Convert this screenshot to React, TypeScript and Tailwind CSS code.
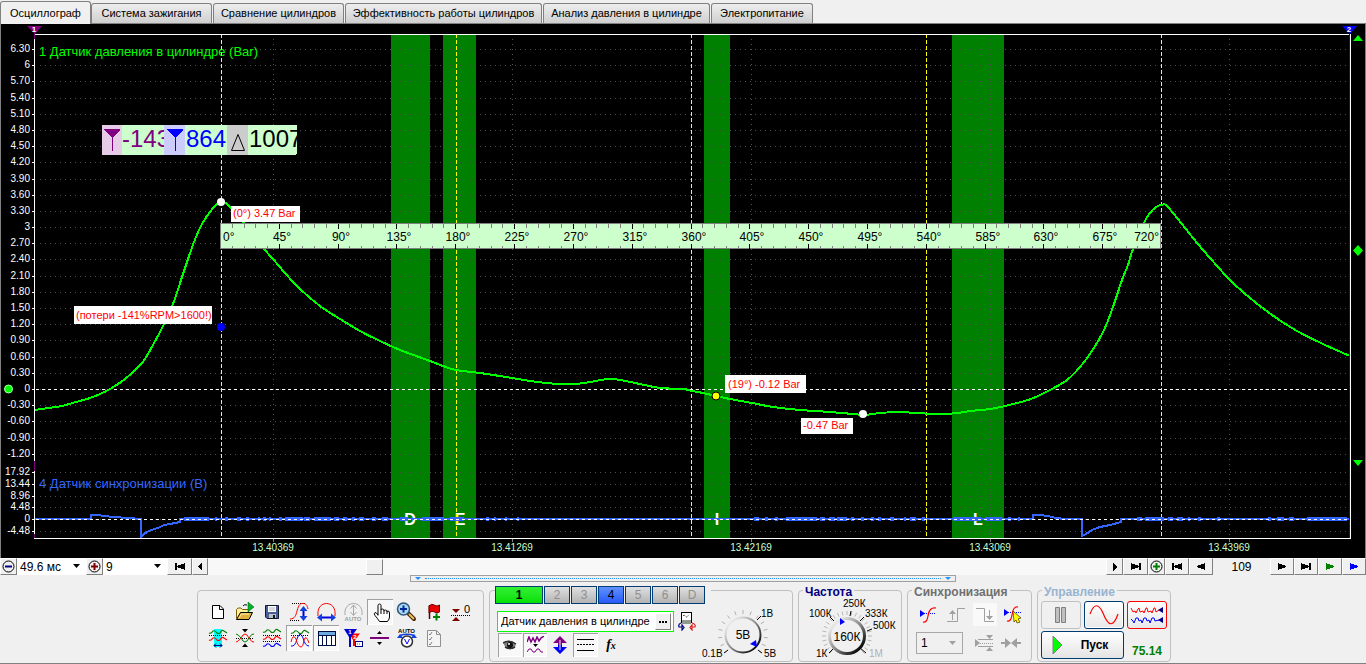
import React from "react";
import type { ReactNode } from "react";

const TABS = [
  { label: "Осциллограф", width: "w-[91px]" },
  { label: "Система зажигания", width: "w-[121px]" },
  { label: "Сравнение цилиндров", width: "w-[131px]" },
  { label: "Эффективность работы цилиндров", width: "w-[197px]" },
  { label: "Анализ давления в цилиндре", width: "w-[167px]" },
  { label: "Электропитание", width: "w-[102px]" },
];

/* ---------- chart data ---------- */

const Y_TICKS = Array.from({ length: 26 }, (_, i) => {
  const step = 21 - i;
  const value = step * 0.3;
  const whole = Math.abs(value - Math.round(value)) < 0.01;
  return { y: Math.round(389 - step * 16.19), label: whole && step >= 0 ? String(Math.round(value)) : value.toFixed(2) };
});

const SYNC_TICKS = [
  { y: 472, label: "17.92" },
  { y: 484, label: "13.44" },
  { y: 496, label: "8.96" },
  { y: 507, label: "4.48" },
  { y: 519, label: "0" },
  { y: 531, label: "-4.48" },
];

const X_TICKS = [
  { x: 273, label: "13.40369" },
  { x: 512, label: "13.41269" },
  { x: 751, label: "13.42169" },
  { x: 990, label: "13.43069" },
  { x: 1229, label: "13.43969" },
];

const BANDS = [
  { x: 391, w: 39, letter: "D", lx: 410 },
  { x: 443, w: 33, letter: "E", lx: 460 },
  { x: 704, w: 26, letter: "I", lx: 717 },
  { x: 952, w: 52, letter: "L", lx: 978 },
];

const PRESSURE: [number, number][] = [
  [35, 410], [48, 408], [62, 406], [76, 402], [90, 398], [100, 394], [110, 389], [125, 379], [142, 363], [153, 345],
  [163, 326], [173, 304], [182, 277], [188, 259], [194, 242], [200, 228], [205, 219], [210, 212], [215, 206], [221, 202],
  [226, 203], [231, 208], [240, 218], [250, 231], [265, 250], [273, 259], [285, 273], [300, 289], [320, 306], [340, 319],
  [360, 331], [380, 341], [400, 350], [430, 361], [443, 366], [456, 370], [480, 373], [512, 378], [530, 381], [558, 384],
  [575, 384], [590, 382], [608, 379], [620, 380], [640, 384], [660, 388], [683, 389], [692, 391], [703, 393], [716, 396],
  [730, 399], [752, 403], [773, 407], [800, 410], [830, 412], [853, 414], [865, 415], [880, 413], [900, 412], [915, 413],
  [940, 414], [958, 413], [970, 411], [990, 409], [1005, 406], [1028, 400], [1040, 395], [1052, 389], [1067, 380],
  [1080, 367], [1092, 351], [1104, 330], [1113, 307], [1122, 280], [1128, 265], [1133, 249], [1144, 223], [1150, 213],
  [1156, 207], [1161, 205], [1166, 205], [1173, 213], [1182, 224], [1193, 238], [1210, 258], [1230, 280], [1250, 298],
  [1272, 315], [1297, 331], [1323, 344], [1350, 356],
];

function smoothPath(points: [number, number][]) {
  let d = `M${points[0][0]} ${points[0][1]}`;
  for (let i = 0; i < points.length - 1; i++) {
    const a = points[Math.max(i - 1, 0)];
    const b = points[i];
    const c = points[i + 1];
    const e = points[Math.min(i + 2, points.length - 1)];
    const k = 6;
    d += `C${b[0] + (c[0] - a[0]) / k} ${b[1] + (c[1] - a[1]) / k} ${c[0] - (e[0] - b[0]) / k} ${c[1] - (e[1] - b[1]) / k} ${c[0]} ${c[1]}`;
  }
  return d;
}

const SYNC =
  "M35 519H91V515H98L104 516L113 517L128 518L141 519V537L144 534L147 532L151 530L158 528L164 525L170 524L180 522V519H1033V515H1040L1048 516L1056 518L1065 519H1082V536L1086 534L1092 530L1100 527L1110 525L1121 522V519H1350";

/* [start, length] of the thicker, noisy stretches of the sync trace */
const NOISE: [number, number][] = [
  [184, 25], [215, 2], [225, 3], [237, 4], [246, 3], [258, 2], [263, 3], [269, 2], [279, 3], [285, 18], [304, 6], [314, 17],
  [334, 5], [343, 4], [352, 3], [359, 5], [372, 4], [382, 6], [400, 8], [422, 22], [450, 14], [486, 3], [494, 2], [505, 2],
  [517, 2], [754, 5], [765, 3], [775, 3], [786, 31], [820, 5], [829, 6], [837, 10], [851, 3], [861, 3], [871, 3], [878, 3],
  [890, 4], [904, 2], [910, 6], [922, 3], [953, 28], [985, 17], [1008, 3], [1018, 2], [1137, 5], [1145, 19], [1168, 5],
  [1177, 6], [1188, 2], [1198, 3], [1217, 3], [1268, 3], [1277, 7], [1289, 5], [1307, 40],
];

const RULER_X = 220;
const RULER_STEP = 941 / 80;

function Tag({ x, y, w, h, tx, children }: { x: number; y: number; w: number; h: number; tx: number; children: string }) {
  return (
    <g>
      <rect x={x} y={y} width={w} height={h} fill="#fff" />
      <text x={tx} y={y + h - 5} fontSize="11" fill="#f00">{children}</text>
    </g>
  );
}

function Chart() {
  return (
    <svg viewBox="0 24 1366 534" className="block h-auto w-full bg-black font-['Liberation_Sans',Arial,sans-serif]" role="img" aria-label="Осциллограмма давления в цилиндре">
      <defs>
        <clipPath id="clipA"><rect x="122" y="125" width="42" height="30" /></clipPath>
        <clipPath id="clipB"><rect x="185" y="125" width="42" height="30" /></clipPath>
        <clipPath id="clipC"><rect x="248" y="125" width="49" height="30" /></clipPath>
      </defs>
      <g shapeRendering="crispEdges">
        <rect x="0" y="24" width="1" height="534" fill="#808080" />
        <rect x="1365" y="24" width="1" height="534" fill="#808080" />
        {BANDS.map((b) => <rect key={b.x} x={b.x} y="35" width={b.w} height="503" fill="#008000" />)}
        {[...Y_TICKS, ...SYNC_TICKS].map((t) => (
          <line key={t.y} x1="40" x2="1349" y1={t.y + 0.5} y2={t.y + 0.5} stroke="#4f4f4f" strokeDasharray="1 4" />
        ))}
        {X_TICKS.map((t) => (
          <g key={t.x}>
            <line x1={t.x + 0.5} x2={t.x + 0.5} y1="39" y2="538" stroke="#4f4f4f" strokeDasharray="1 4" />
            <line x1={t.x + 0.5} x2={t.x + 0.5} y1="539" y2="542" stroke="#808080" />
          </g>
        ))}
      </g>

      <text x="39" y="56" fontSize="13" fill="#00ff00">1 Датчик давления в цилиндре (Bar)</text>
      <text x="39" y="488" fontSize="13" fill="#3366ff">4 Датчик синхронизации (В)</text>
      <g fontSize="16" fontWeight="bold" fill="#fff" textAnchor="middle">
        {BANDS.map((b) => <text key={b.letter} x={b.lx} y="525">{b.letter}</text>)}
      </g>

      <g shapeRendering="crispEdges">
        {[221, 456, 691, 926, 1161].map((x) => (
          <line key={x} x1={x + 0.5} x2={x + 0.5} y1="34" y2="538" stroke="#ffff00" strokeDasharray="4 2" />
        ))}
        <line x1="36" x2="1350" y1="389.5" y2="389.5" stroke="#fff" strokeDasharray="3 3" />
      </g>
      <path d={smoothPath(PRESSURE)} fill="none" stroke="#00ff00" strokeWidth="2" shapeRendering="crispEdges" />
      <g shapeRendering="crispEdges">
        <path d={SYNC} fill="none" stroke="#3366ff" strokeWidth="2" />
        {NOISE.map(([x, w]) => <rect key={x} x={x} y="517" width={w} height="4" fill="#3366ff" />)}
        <line x1="36" x2="1350" y1="519.5" y2="519.5" stroke="#fff" strokeDasharray="3 3" />
      </g>

      <g shapeRendering="crispEdges">
        <rect x="34" y="34" width="1317" height="1" fill="#fff" />
        <rect x="34" y="538" width="1317" height="1" fill="#fff" />
        <rect x="34" y="34" width="1" height="505" fill="#fff" />
        <rect x="1350" y="34" width="1" height="505" fill="#fff" />
        <rect x="1349" y="34" width="1" height="504" fill="#00f" />
        <rect x="34" y="33" width="1" height="6" fill="#800080" />
        <rect x="34" y="461" width="1" height="10" fill="#800080" />
        <rect x="34" y="534" width="1" height="4" fill="#800080" />
        {[...Y_TICKS, ...SYNC_TICKS].map((t) => <rect key={t.y} x="32" y={t.y} width="2" height="1" fill="#fff" />)}
      </g>
      <g fontSize="10" fill="#fff" textAnchor="end">
        {[...Y_TICKS, ...SYNC_TICKS].map((t) => <text key={t.y} x="30" y={t.y + 3}>{t.label}</text>)}
      </g>
      <g fontSize="10" fill="#ccffcc" textAnchor="middle">
        {X_TICKS.map((t) => <text key={t.x} x={t.x} y="551">{t.label}</text>)}
      </g>

      <path d="M27 26H42L35 34Z" fill="#800080" />
      <text x="34" y="32" fontSize="8" fontWeight="bold" fill="#fff" textAnchor="middle">1</text>
      <path d="M1342 26H1357L1350 34Z" fill="#0000ff" />
      <text x="1349" y="32" fontSize="8" fontWeight="bold" fill="#fff" textAnchor="middle">2</text>
      <path d="M1353 41L1358 35L1363 41ZM1353 250.500L1358 245L1363 250.500L1358 256ZM1353 460H1363L1358 466Z" fill="#00ff00" />
      <circle cx="8.500" cy="389" r="4" fill="#00ff00" stroke="#b0ffb0" />

      <rect x="220.500" y="223.500" width="940" height="25" fill="#ccffcc" stroke="#808080" shapeRendering="crispEdges" />
      <g shapeRendering="crispEdges">
        {Array.from({ length: 79 }, (_, i) => {
          const n = i + 1;
          const x = Math.round(RULER_X + n * RULER_STEP);
          const major = n % 5 === 0;
          return (
            <g key={n} fill={major ? "#000" : "#808080"}>
              <rect x={x} y="224" width="1" height={major ? 5 : 4} />
              <rect x={x} y={major ? 244 : 246} width="1" height={major ? 5 : 3} />
            </g>
          );
        })}
      </g>
      <g fontSize="12" fill="#000">
        <text x="223" y="241">0°</text>
        <g textAnchor="middle">
          {Array.from({ length: 15 }, (_, i) => (
            <text key={i} x={Math.round(RULER_X + (i + 1) * 5 * RULER_STEP + 3)} y="241">{`${(i + 1) * 45}°`}</text>
          ))}
        </g>
        <text x="1159" y="241" textAnchor="end">720°</text>
      </g>

      <circle cx="221" cy="202" r="4" fill="#fff" />
      <circle cx="221" cy="327" r="4" fill="#00f" />
      <circle cx="716" cy="396" r="4" fill="#ff0" stroke="#000" />
      <circle cx="863" cy="414" r="4" fill="#fff" />
      <Tag x={231} y={206} w={69} h={16} tx={233}>(0°) 3.47 Bar</Tag>
      <Tag x={74} y={306} w={138} h={18} tx={76}>{"(потери -141%RPM>1600!)"}</Tag>
      <Tag x={725} y={375} w={81} h={18} tx={728}>(19°) -0.12 Bar</Tag>
      <Tag x={801} y={418} w={52} h={16} tx={803}>-0.47 Bar</Tag>

      <g shapeRendering="crispEdges">
        <rect x="102" y="125" width="195" height="30" rx="2" fill="#ccffcc" />
        <rect x="102" y="125" width="20" height="30" fill="#e6cce6" />
        <rect x="164" y="125" width="21" height="30" fill="#ccccff" />
        <rect x="227" y="125" width="21" height="30" fill="#cccccc" />
        <path d="M104 129H120V130L113 137V151H112V137L104 130Z" fill="#800080" />
        <path d="M167 129H183V130L176 137V151H175V137L167 130Z" fill="#0000ff" />
      </g>
      <path d="M231.500 150.500L238 134.500L244.500 150.500Z" fill="none" stroke="#000" />
      <g fontSize="24">
        <text x="122" y="147" fill="#800080" clipPath="url(#clipA)">-143</text>
        <text x="186" y="147" fill="#0000ff" clipPath="url(#clipB)">864</text>
        <text x="249" y="147" fill="#000" clipPath="url(#clipC)">1007</text>
      </g>
    </svg>
  );
}

/* ---------- controls ---------- */

function NavButton({ label, width, children }: { label: string; width: string; children: ReactNode }) {
  return (
    <button aria-label={label} className={`${width} flex h-[17px] shrink-0 items-center justify-center border border-t-white border-r-[#808080] border-b-[#808080] border-l-white bg-[#f0f0f0]`}>
      {children}
    </button>
  );
}

function Skip({ d, fill = "#000" }: { d: string; fill?: string }) {
  return (
    <svg width="12" height="9" viewBox="0 0 12 9" shapeRendering="crispEdges">
      <path d={d} fill={fill} />
    </svg>
  );
}

const FIRST = "M1 1H3V8H1ZM11 1V8L3 5V4Z";
const LAST = "M9 1H11V8H9ZM1 1V8L9 5V4Z";
const RIGHT = "M2 1V8L10 5V4Z";
const LEFT = "M10 1V8L2 5V4Z";
const SMALL_RIGHT = "M4 1V9L8 5V4Z";
const SMALL_LEFT = "M8 1V9L4 5V4Z";

function CirclePlus({ color, minus = false }: { color: string; minus?: boolean }) {
  return (
    <svg width="13" height="13" viewBox="0 0 13 13">
      <circle cx="6.500" cy="6.500" r="5.500" fill="none" stroke="#000" />
      <path d={minus ? "M3 5.500H10V7.500H3Z" : "M3 5.500H10V7.500H3ZM5.500 3H7.500V10H5.500Z"} fill={color} />
    </svg>
  );
}

function Combo({ label, value, width }: { label: string; value: string; width: string }) {
  return (
    <div className={`${width} relative h-[17px] shrink-0 bg-white`}>
      <select aria-label={label} className="block h-[17px] w-full appearance-none bg-white pl-[3px] text-xs leading-4">
        <option>{value}</option>
      </select>
      <svg className="pointer-events-none absolute top-1.5 right-1.5" width="7" height="5" viewBox="0 0 7 5"><path d="M0 0H7L3.500 4Z" /></svg>
    </div>
  );
}

function Navigation() {
  return (
    <div className="flex h-[17px] items-center bg-[#f0f0f0]">
      <NavButton label="Уменьшить масштаб" width="w-[17px]"><CirclePlus color="#000080" minus /></NavButton>
      <Combo label="Длительность" value="49.6 мс" width="w-[69px]" />
      <NavButton label="Увеличить масштаб" width="w-[17px]"><CirclePlus color="#800000" /></NavButton>
      <Combo label="Номер" value="9" width="w-16" />
      <NavButton label="В начало" width="w-[25px]"><Skip d={FIRST} /></NavButton>
      <NavButton label="Прокрутить назад" width="w-4"><Skip d={SMALL_LEFT} /></NavButton>
      <input
        type="range"
        aria-label="Позиция"
        min="0"
        max="1000"
        defaultValue="179"
        className="m-0 h-[17px] min-w-0 flex-1 appearance-none bg-[#f8f8f8] [&::-webkit-slider-thumb]:h-4 [&::-webkit-slider-thumb]:w-[17px] [&::-webkit-slider-thumb]:appearance-none [&::-webkit-slider-thumb]:border [&::-webkit-slider-thumb]:border-t-white [&::-webkit-slider-thumb]:border-r-[#808080] [&::-webkit-slider-thumb]:border-b-[#808080] [&::-webkit-slider-thumb]:border-l-white [&::-webkit-slider-thumb]:bg-[#f0f0f0]"
      />
      <NavButton label="Прокрутить вперёд" width="w-[17px]"><Skip d={SMALL_RIGHT} /></NavButton>
      <NavButton label="В конец" width="w-[25px]"><Skip d={LAST} /></NavButton>
      <NavButton label="Добавить" width="w-[17px]"><CirclePlus color="#008000" /></NavButton>
      <NavButton label="Первый кадр" width="w-6"><Skip d={FIRST} /></NavButton>
      <NavButton label="Предыдущий кадр" width="w-6"><Skip d={LEFT} /></NavButton>
      <output className="w-[57px] shrink-0 text-center text-xs">109</output>
      <NavButton label="Следующий кадр" width="w-6"><Skip d={RIGHT} /></NavButton>
      <NavButton label="Последний кадр" width="w-6"><Skip d={LAST} /></NavButton>
      <NavButton label="Воспроизвести" width="w-6"><Skip d={RIGHT} fill="#008000" /></NavButton>
      <NavButton label="Воспроизвести всё" width="w-6"><Skip d={RIGHT} fill="#0000ff" /></NavButton>
    </div>
  );
}

/* ---------- toolbar icons, drawn in a 26 px cell ---------- */

function Wave({ y, color, x = 4 }: { y: number; color: string; x?: number }) {
  return (
    <path
      d={`M${x} ${y + 1}Q${x + 2} ${y + 2} ${x + 4} ${y - 1}Q${x + 6} ${y - 2} ${x + 8} ${y + 1}Q${x + 9} ${y + 2} ${x + 11} ${y + 1}Q${x + 13} ${y - 3} ${x + 15} ${y - 1}L${x + 18} ${y + 1}`}
      fill="none"
      stroke={color}
      strokeWidth="1.200"
    />
  );
}

const dots = { stroke: "#000", strokeDasharray: "1 1", fill: "none" };

const TOOLS: { label: string; pressed?: boolean; icon: ReactNode }[] = [
  { label: "Новый", icon: <path d="M7.500 6.500H15L18.500 10V19.500H7.500ZM14.500 6.500V10.500H18.500" fill="#fff" stroke="#000" /> },
  {
    label: "Открыть",
    icon: (
      <>
        <path d="M4.500 19.500V10.500L6 9H9L10.500 10.500H16.500V13" fill="#fff0a0" stroke="#806000" />
        <path d="M4.500 20.500L8.500 13.500H20.500L17 20.500Z" fill="#e0b040" stroke="#000" />
        <path d="M7 19L9.500 15H17" stroke="#fff0a0" fill="none" />
        <path d="M11 7Q12 5 15 6" stroke="#000" fill="none" />
        <path d="M16 3L22 8L16 13Z" fill="#00b030" stroke="#006000" strokeWidth="0.500" />
      </>
    ),
  },
  {
    label: "Сохранить",
    icon: (
      <>
        <path d="M6.500 6.500H19.500V19.500H8L6.500 18Z" fill="#486098" stroke="#101828" />
        <rect x="9" y="7" width="8" height="6" fill="#fff" />
        <path d="M10 9H16M10 11H16" stroke="#b0b0c0" />
        <rect x="10" y="15" width="7" height="4" fill="#c0c0c0" />
        <rect x="14" y="16" width="2" height="3" fill="#101828" />
      </>
    ),
  },
  {
    label: "Масштаб по вертикали",
    icon: (
      <>
        <path d="M6 4.500H19M4 21.500H14" {...dots} />
        <path d="M4 20C9 20 10 16 11 12C13 5 14 4.500 17 4.500C20 4.500 21 6 22 10" fill="none" stroke="#f00" />
        <path d="M17.500 9V20" stroke="#0000e0" strokeWidth="2" />
        <path d="M17.500 7L21.500 12H13.500ZM17.500 22L21.500 17H13.500Z" fill="#1040e0" />
      </>
    ),
  },
  {
    label: "Масштаб по горизонтали",
    icon: (
      <>
        <path d="M5 17C4 8 9 4.500 13.500 4.500C18 4.500 23 8 22 17" fill="none" stroke="#f00" />
        <path d="M8 18.500H20" stroke="#0000e0" strokeWidth="2" />
        <path d="M4 18.500L9 14.500V22.500ZM23 18.500L18 14.500V22.500Z" fill="#1040e0" />
      </>
    ),
  },
  {
    label: "Автомасштаб",
    icon: (
      <>
        <path d="M5 16C4 8 9 4.500 13.500 4.500C18 4.500 23 8 22 16" fill="none" stroke="#a8a8a8" />
        <path d="M13.500 6V16M10.500 9.500L13.500 6L16.500 9.500M10.500 13L13.500 16.500L16.500 13" fill="none" stroke="#a8a8a8" />
        <text x="13" y="22" textAnchor="middle" fontSize="6" fontWeight="bold" fill="#a0a0a0">AUTO</text>
      </>
    ),
  },
  {
    label: "Рука",
    pressed: true,
    icon: (
      <path
        d="M11 16.500V6.500Q11 5 12.500 5Q14 5 14 6.500V11Q14 10 15.500 10Q17 10 17 12Q17 11 18.500 11Q20 11 20 13Q20 12 21 12Q22.500 12 22.500 14V18Q22.500 20 20.500 22.500H12.500Q11 20 8 16.500Q6.500 14.500 8 13.500Q9.500 13.500 11 16M14 11V15M17 12V15M20 13V15"
        fill="#fff"
        stroke="#000"
      />
    ),
  },
  {
    label: "Увеличить",
    icon: (
      <>
        <path d="M14 14L20 20" stroke="#402000" strokeWidth="4" strokeLinecap="round" />
        <path d="M15 15L20 20" stroke="#f0c060" strokeWidth="2" />
        <circle cx="9.500" cy="10" r="6" fill="#a8d8f8" stroke="#305878" strokeWidth="1.500" />
        <path d="M6 10H13M9.500 6.500V13.500" stroke="#002898" strokeWidth="2" />
      </>
    ),
  },
  {
    label: "Добавить метку",
    icon: (
      <>
        <path d="M8.500 6V20" stroke="#500000" strokeWidth="1.500" />
        <path d="M8 7Q11 4 13 6Q16 8 18.500 6V13Q16 15 13.500 13Q11 11 8 14Z" fill="#e80000" stroke="#700000" />
        <path d="M12 18H19M15.500 14.500V21.500" stroke="#008000" strokeWidth="2" />
      </>
    ),
  },
  {
    label: "Обнулить",
    icon: (
      <>
        <path d="M4 10H12L8 14ZM4 22H12L8 18Z" fill="#800000" />
        <path d="M3 16.500H22" {...dots} />
        <text x="19" y="14" textAnchor="middle" fontSize="11">0</text>
      </>
    ),
  },
  {
    label: "Участок",
    icon: (
      <>
        <rect x="9" y="4" width="8" height="18" fill="#00ffff" />
        <Wave y={7} color="#008000" />
        <path d="M4 10.500H22" {...dots} />
        <Wave y={14} color="#f00" />
        <path d="M9 20.500H17M11 18.500L9 20.500L11 22.500M15 18.500L17 20.500L15 22.500" stroke="#000080" fill="none" />
      </>
    ),
  },
  {
    label: "Наложение",
    icon: (
      <>
        <path d="M10 4H16L13 7.500ZM10 22H16L13 18.500Z" />
        <path d="M4 13.500H22" {...dots} />
        <path d="M4 17Q6 17 9 13Q13 5 17 13Q20 18 22 17" stroke="#f00" fill="none" />
        <path d="M4 9Q6 9 9 13Q13 21 17 13Q20 8 22 9" stroke="#008000" fill="none" />
      </>
    ),
  },
  {
    label: "Разделить сигналы",
    icon: (
      <>
        <Wave y={6} color="#008000" />
        <path d="M4 10.500H22M4 16.500H22" {...dots} />
        <Wave y={13} color="#f00" />
        <Wave y={20} color="#00f" />
      </>
    ),
  },
  {
    label: "Совместить сигналы",
    pressed: true,
    icon: (
      <>
        <path d="M5 10.500H22" {...dots} />
        <Wave y={7} color="#008000" x={5} />
        <path d="M5 21Q9 22 11 14Q14 5 17 13Q19 21 23 21" stroke="#00f" fill="none" />
        <path d="M5 17Q7 8 10 14Q12 22 15 22Q17 22 18 15Q20 9 23 18" stroke="#f00" fill="none" />
      </>
    ),
  },
  {
    label: "Таблица",
    pressed: true,
    icon: (
      <>
        <rect x="5.500" y="6.500" width="17" height="14" fill="#fff" stroke="#001040" />
        <rect x="6" y="7" width="16" height="3" fill="#70a8e0" />
        <path d="M5 10.500H23M9.500 10V21M13.500 10V21M18.500 10V21" stroke="#001040" />
      </>
    ),
  },
  {
    label: "Маркеры",
    icon: (
      <>
        <path d="M9 8.500H20L15 15V21H13V15Z" fill="#f00" />
        <path d="M4 4H17L11 12V22H9V12Z" fill="#0000d0" />
        <text x="10" y="9" fontSize="6" fontWeight="bold" fill="#fff" textAnchor="middle">1</text>
        <text x="15" y="14" fontSize="6" fontWeight="bold" fill="#fff" textAnchor="middle">2</text>
        <rect x="15.500" y="16.500" width="7" height="5" fill="#fff" stroke="#000080" />
        <path d="M17 19H21" stroke="#606060" strokeDasharray="1 1" />
      </>
    ),
  },
  { label: "Разделитель", icon: <><path d="M3 12H22V14H3Z" fill="#800080" /><path d="M10 9H15L12.500 6ZM10 17H15L12.500 20Z" /></> },
  {
    label: "Автонастройка",
    icon: (
      <>
        <text x="12.500" y="8" textAnchor="middle" fontSize="6" fontWeight="bold">AUTO</text>
        <circle cx="13" cy="16.500" r="5.500" fill="#fff" stroke="#303030" strokeWidth="1.500" />
        <path d="M6 10.500Q13 8 20 10.500" fill="none" stroke="#1040e0" strokeWidth="1.500" />
        <path d="M3 13L6 9L9 13ZM23 13L20 9L17 13Z" fill="#1040e0" />
        <path d="M10.500 14L13 19L15.500 14" fill="none" stroke="#00f" />
      </>
    ),
  },
  {
    label: "Список",
    icon: (
      <>
        <path d="M6.500 5.500H15.500L19.500 9.500V21.500H6.500ZM15.500 5.500V9.500H19.500" fill="#f4f4f4" stroke="#909090" />
        <path d="M8 9L9 10L11 7M8 14L9 15L11 12M8 19L9 20L11 17" stroke="#808080" fill="none" />
      </>
    ),
  },
];

function IconButton({ label, pressed = false, size = "h-[26px] w-[26px]", children }: { label: string; pressed?: boolean; size?: string; children: ReactNode }) {
  return (
    <button
      aria-label={label}
      aria-pressed={pressed}
      className={`${size} flex shrink-0 items-center justify-center ${pressed ? "bg-[#f8f8f8] shadow-[inset_1px_1px_0_#a0a0a0,inset_-1px_-1px_0_#ffffff]" : ""}`}
    >
      {children}
    </button>
  );
}

function Panel({ title, titleColor = "", className, children }: { title: string; titleColor?: string; className: string; children: ReactNode }) {
  return (
    <section aria-label={title} className={`${className} relative h-[72px] shrink-0 rounded border border-[#c0c0c0]`}>
      {titleColor && (
        <h2 className={`${titleColor} absolute -top-[5px] left-1 bg-[#f0f0f0] px-0.5 text-xs leading-3 font-bold`}>{title}</h2>
      )}
      {children}
    </section>
  );
}

function dialTicks(cx: number, cy: number, from: number, to: number, count: number) {
  return Array.from({ length: count }, (_, i) => {
    const a = ((from + ((to - from) * i) / (count - 1)) * Math.PI) / 180;
    return `M${(cx + 21 * Math.cos(a)).toFixed(1)} ${(cy + 21 * Math.sin(a)).toFixed(1)}L${(cx + 25 * Math.cos(a)).toFixed(1)} ${(cy + 25 * Math.sin(a)).toFixed(1)}`;
  }).join("");
}

const CHANNELS = ["1", "2", "3", "4", "5", "6", "D"];
const DIM = "w-[26px] bg-linear-to-b from-[#e0e0e0] to-[#b4b4b4] text-[#909090]";

function channelStyle(name: string) {
  if (name === "1") return "w-12 bg-linear-to-b from-[#30f030] to-[#00e000] font-bold text-black";
  if (name === "4") return "w-[26px] bg-linear-to-b from-[#6090ff] to-[#2858f8] text-black";
  return DIM;
}

function ChannelPanel() {
  return (
    <Panel title="Каналы" className="w-[304px]">
      <div className="flex h-full">
        <div className="flex flex-col pl-[5px]">
          <div className="-mt-[5px] flex gap-px bg-[#f0f0f0] pr-1.5">
            {CHANNELS.map((c) => (
              <button key={c} className={`${channelStyle(c)} h-[18px] border border-[#003c74] text-xs leading-4`}>{c}</button>
            ))}
          </div>
          <div className="mt-[7px] flex items-center gap-1">
            <div className="ml-[2px] flex h-[21px] w-[177px] items-center border border-[#00ff00] bg-white pr-0.5">
              <input aria-label="Датчик канала" defaultValue="Датчик давления в цилиндре" className="min-w-0 flex-1 bg-transparent pl-[3px] text-[11px] outline-none" />
              <button aria-label="Выбрать датчик" className="flex h-[17px] w-4 shrink-0 items-center justify-center border border-t-white border-r-[#808080] border-b-[#808080] border-l-white bg-[#f0f0f0]">
                <svg width="8" height="2"><path d="M0 0H2V2H0ZM3 0H5V2H3ZM6 0H8V2H6Z" /></svg>
              </button>
            </div>
            <button aria-label="Поменять прибор">
              <svg width="18" height="19" viewBox="0 0 18 19">
                <rect x="3.500" y="0.500" width="10" height="10" fill="#fff" stroke="#000" />
                <rect x="4" y="8" width="9" height="4" fill="#909890" />
                <path d="M5 4L6 3L8.500 5L11 3" stroke="#000" fill="none" strokeDasharray="1 1" />
                <path d="M3 11Q0 12 1 15H4M4 13V18L6 15.500Z" stroke="#000080" fill="none" strokeWidth="1.200" />
                <path d="M14 11Q18 12 17 15H14M14 13V18L12 15.500Z" stroke="#e02020" fill="none" strokeWidth="1.200" />
              </svg>
            </button>
          </div>
          <div className="mt-px ml-[3px] flex gap-px">
            <IconButton label="Показать" pressed size="h-6 w-6">
              <svg width="14" height="12" viewBox="0 0 14 12">
                <path d="M0 4Q6 -1 13 5L12 8Q8 12 3 9Z" fill="#808080" />
                <path d="M0 4Q6 0 13 5M2 8Q7 11 12 8" stroke="#303030" fill="none" strokeWidth="1.500" />
                <circle cx="7" cy="6" r="3" fill="#101010" />
                <circle cx="6" cy="5" r="1" fill="#fff" />
              </svg>
            </IconButton>
            <IconButton label="Фильтр" pressed size="h-6 w-6">
              <svg width="17" height="18" viewBox="0 0 17 18" fill="none" stroke="#800080">
                <path d="M0 6L2 1L4 6L6 2L8 6L10 1L12 5L14 2L17 0" strokeWidth="1.500" />
                <path d="M0 16L2 13L4 13L6 16H8L10 13H12L14 16H16" />
                <path d="M6 8H11L8.500 11Z" fill="#000" stroke="none" />
              </svg>
            </IconButton>
            <IconButton label="Инвертировать" size="h-6 w-6">
              <svg width="14" height="18" viewBox="0 0 14 18">
                <path d="M7 0L14 7H9V9H5V7H0Z" fill="#800080" />
                <path d="M7 18L14 11H9V9H5V11H0Z" fill="#0000ff" />
                <path d="M7 4V14" stroke="#f0f0f0" strokeWidth="1" />
              </svg>
            </IconButton>
            <IconButton label="Линии" pressed size="h-6 w-[25px]">
              <svg width="17" height="14" viewBox="0 0 17 14" stroke="#000" shapeRendering="crispEdges">
                <path d="M0 1.500H17M0 12.500H17" />
                <path d="M0 6.500H17" strokeDasharray="2 1" />
              </svg>
            </IconButton>
            <IconButton label="Функция" size="h-6 w-6">
              <span className="font-['Liberation_Serif',serif] text-sm font-bold italic">f<span className="text-[10px]">x</span></span>
            </IconButton>
          </div>
        </div>
        <svg width="84" height="56" viewBox="0 0 84 56" className="absolute right-[9px] bottom-[2px]" fontSize="10" role="img" aria-label="Диапазон 5В">
          <defs>
            <linearGradient id="knob" x1="0" y1="0" x2="1" y2="1">
              <stop offset="0.150" stopColor="#e8e8e8" /><stop offset="0.550" stopColor="#808080" /><stop offset="0.900" stopColor="#000" />
            </linearGradient>
          </defs>
          <path d={dialTicks(44, 32, -225, 45, 15)} stroke="#b0b0b0" />
          <path d="M58 17L62 13M29 47L25 50M59 47L63 50" stroke="#000" />
          <circle cx="44" cy="32" r="17.500" fill="#f0f0f0" stroke="url(#knob)" strokeWidth="2" />
          <text x="44" y="36" fontSize="12" textAnchor="middle">5В</text>
          <path d="M51 41L57 37L58 44Z" fill="#00f" />
          <text x="62" y="14">1В</text>
          <text x="3" y="54">0.1В</text>
          <text x="65" y="54">5В</text>
        </svg>
      </div>
    </Panel>
  );
}

function FrequencyPanel() {
  return (
    <Panel title="Частота" titleColor="text-[#000080]" className="w-[104px]">
      <svg width="102" height="64" viewBox="799 598 102 64" className="mt-[7px]" fontSize="10" role="img" aria-label="Частота 160К">
        <path d={dialTicks(847, 636, -225, 45, 25)} stroke="#b8b8b8" />
        <path d="M834 621L830 617M850 616L851 611M860 621L864 617M867 631L872 629M834 648L829 653M860 648L866 653" stroke="#000" />
        <circle cx="847" cy="636" r="17.500" fill="#f0f0f0" stroke="url(#knob)" strokeWidth="3" />
        <text x="847" y="641" fontSize="12" textAnchor="middle">160К</text>
        <path d="M840 618L845 622L840 625Z" fill="#00f" />
        <text x="843" y="607">250К</text>
        <text x="809" y="617">100К</text>
        <text x="865" y="617">333К</text>
        <text x="873" y="629">500К</text>
        <text x="816" y="657">1К</text>
        <text x="869" y="657" fill="#b0b0b0">1М</text>
      </svg>
    </Panel>
  );
}

function SyncPanel() {
  return (
    <Panel title="Синхронизация" titleColor="text-[#707070]" className="w-[125px]">
      <div className="mt-3 flex h-[23px] justify-between pr-1.5 pl-2">
        <IconButton label="Уровень" size="h-[23px] w-6">
          <svg width="18" height="18" viewBox="0 0 18 18" fill="none">
            <path d="M1 7.500H17" stroke="#00f" strokeDasharray="1 1" />
            <path d="M4 16Q8 17 9 10Q10 1 17 2" stroke="#f00" strokeWidth="1.200" />
            <path d="M1 4L6 7.500L1 11Z" fill="#00f" />
          </svg>
        </IconButton>
        <IconButton label="Фронт" size="h-[23px] w-6">
          <svg width="18" height="16" viewBox="0 0 18 16" fill="none" stroke="#a0a0a0"><path d="M0 14.500H10.500V1.500H18M5.500 13V5" /><path d="M2 7H9L5.500 3Z" fill="#a0a0a0" stroke="none" /></svg>
        </IconButton>
        <span className="bg-[#f9f9f9]">
          <IconButton label="Спад" size="h-[23px] w-6">
            <svg width="18" height="16" viewBox="0 0 18 16" fill="none" stroke="#a0a0a0"><path d="M0 1.500H8.500V14.500H18M13.500 3V11" /><path d="M10 9H17L13.500 13Z" fill="#a0a0a0" stroke="none" /></svg>
          </IconButton>
        </span>
        <IconButton label="Захват" size="h-[23px] w-6">
          <svg width="20" height="19" viewBox="0 0 20 19" fill="none">
            <path d="M1 7.500H19" stroke="#00f" strokeDasharray="1 1" />
            <path d="M4 16Q8 17 9 10Q10 1 15 2" stroke="#f00" strokeWidth="1.200" />
            <path d="M1 4L6 7.500L1 11Z" fill="#00f" />
            <path d="M10 6L18 13L15 14L17 17L14 18L13 15L11 17Z" fill="#ff0" stroke="#403000" strokeWidth="0.700" />
          </svg>
        </IconButton>
      </div>
      <div className="mt-1.5 flex h-[22px] items-center gap-1.5 pl-2">
        <div className="relative mr-1.5 h-[22px] w-[47px] border border-[#a8a8a8]">
          <select aria-label="Канал синхронизации" className="block h-full w-full appearance-none bg-transparent pl-1 text-xs leading-4"><option>1</option></select>
          <svg className="pointer-events-none absolute top-2 right-1.5" width="7" height="5" viewBox="0 0 7 5"><path d="M0 0H7L3.500 4Z" fill="#a0a0a0" /></svg>
        </div>
        <button aria-label="Гистерезис">
          <svg width="20" height="18" viewBox="0 0 20 18" fill="#a0a0a0">
            <path d="M0 5L5 9L0 13ZM11 1H18L14.500 5ZM11 17H18L14.500 13Z" />
            <path d="M3 5.500H18M3 12.500H18" stroke="#a0a0a0" fill="none" />
            <path d="M5 9.500H18" stroke="#a0a0a0" fill="none" strokeDasharray="1 1" />
          </svg>
        </button>
        <button aria-label="Центрировать">
          <svg width="20" height="10" viewBox="0 0 20 10" fill="#a0a0a0"><path d="M0 4H4V0L10 5L4 10V6H0ZM20 4H16V0L10 5L16 10V6H20Z" /></svg>
        </button>
      </div>
    </Panel>
  );
}

const XP = "flex h-7 items-center justify-center rounded-[3px] border";

function ControlPanel() {
  return (
    <Panel title="Управление" titleColor="text-[#99b4d1]" className="w-[134px]">
      <div className="grid grid-cols-3 gap-x-[3px] gap-y-0.5 px-[3px] pt-[10px]">
        <button aria-label="Пауза" className={`${XP} border-[#c0c0c0] bg-[#f0f0f0]`}>
          <svg width="12" height="16"><path d="M0.500 0.500H4.500V15.500H0.500ZM6.500 0.500H10.500V15.500H6.500Z" fill="#c0c0c0" stroke="#808080" /></svg>
        </button>
        <button aria-label="Синус" className={`${XP} border-[#003c74] bg-linear-to-b from-white to-[#e8e8e8] shadow-[inset_0_0_0_1px_#ffffff]`}>
          <svg width="30" height="20" viewBox="0 0 30 20"><path d="M1 9Q7 -7 14 8Q22 29 29 9" fill="none" stroke="#f00" strokeWidth="1.200" /></svg>
        </button>
        <button aria-label="Запись" className={`${XP} border-[#ff0000] bg-linear-to-b from-white to-[#e8e8e8]`}>
          <svg width="34" height="18" viewBox="0 0 34 18" fill="none">
            <path d="M1 2L3 6L5 5L6 7L8 3L9 2L10 6L13 5L14 7L16 2L17 2L18 6L21 5L22 7L24 2L25 2L26 6L29 4" stroke="#f00" />
            <path d="M1 13L3 15L4 17L6 12L8 12L9 15L11 14L12 17L14 12L16 12L17 15L19 14L20 17L22 12L24 12L25 15L29 14" stroke="#00f" />
            <path d="M28 4L33 1V7ZM28 14L33 11V17Z" fill="#000080" />
          </svg>
        </button>
        <button className={`${XP} relative col-span-2 border-[#003c74] bg-linear-to-b from-white to-[#e4e4e4] pl-6 text-xs font-bold`}>
          <svg className="absolute left-2.5" width="11" height="20" viewBox="0 0 11 20"><path d="M1 1L10 10L1 19Z" fill="#00ff00" stroke="#808080" /></svg>
          Пуск
        </button>
        <output className="self-end text-center text-xs leading-4 font-bold text-[#008000]">75.14</output>
      </div>
    </Panel>
  );
}

export default function App() {
  return (
    <div className="flex min-h-screen flex-col border-b border-[#808080] bg-[#f0f0f0] font-['Liberation_Sans',Arial,sans-serif] text-black">
      <nav role="tablist" className="flex h-6 items-end border-b border-[#808080]">
        {TABS.map((t, i) => (
          <button
            key={t.label}
            role="tab"
            aria-selected={i === 0}
            className={`${t.width} shrink-0 rounded-t-[3px] border border-b-0 border-[#808080] text-[11px] whitespace-nowrap ${
              i === 0 ? "-mb-px h-[23px] bg-[#f0f0f0]" : "mr-px h-5 bg-linear-to-b from-[#eeeeee] to-[#cfcfcf]"
            }`}
          >
            {t.label}
          </button>
        ))}
      </nav>
      <main className="bg-black">
        <Chart />
      </main>
      <Navigation />
      <div className="mx-auto flex h-[7px] w-[546px] items-center justify-between border border-[#a0a0a0] px-1">
        <svg width="6" height="3"><path d="M0 0H6L3 3Z" fill="#1e90ff" /></svg>
        <div className="mx-1 flex-1 border-t border-dotted border-[#1e90ff]" />
        <svg width="6" height="3"><path d="M0 0H6L3 3Z" fill="#1e90ff" /></svg>
      </div>
      <footer className="flex items-start justify-center gap-[5px] pt-2 pl-0.5">
        <Panel title="Инструменты" className="w-[287px]">
          <div className="grid grid-cols-10 gap-x-px pt-2 pr-[9px] pl-[7px]">
            {TOOLS.map((t) => (
              <IconButton key={t.label} label={t.label} pressed={t.pressed}>
                <svg width="26" height="26" viewBox="0 0 26 26">{t.icon}</svg>
              </IconButton>
            ))}
          </div>
        </Panel>
        <ChannelPanel />
        <FrequencyPanel />
        <SyncPanel />
        <ControlPanel />
      </footer>
    </div>
  );
}
